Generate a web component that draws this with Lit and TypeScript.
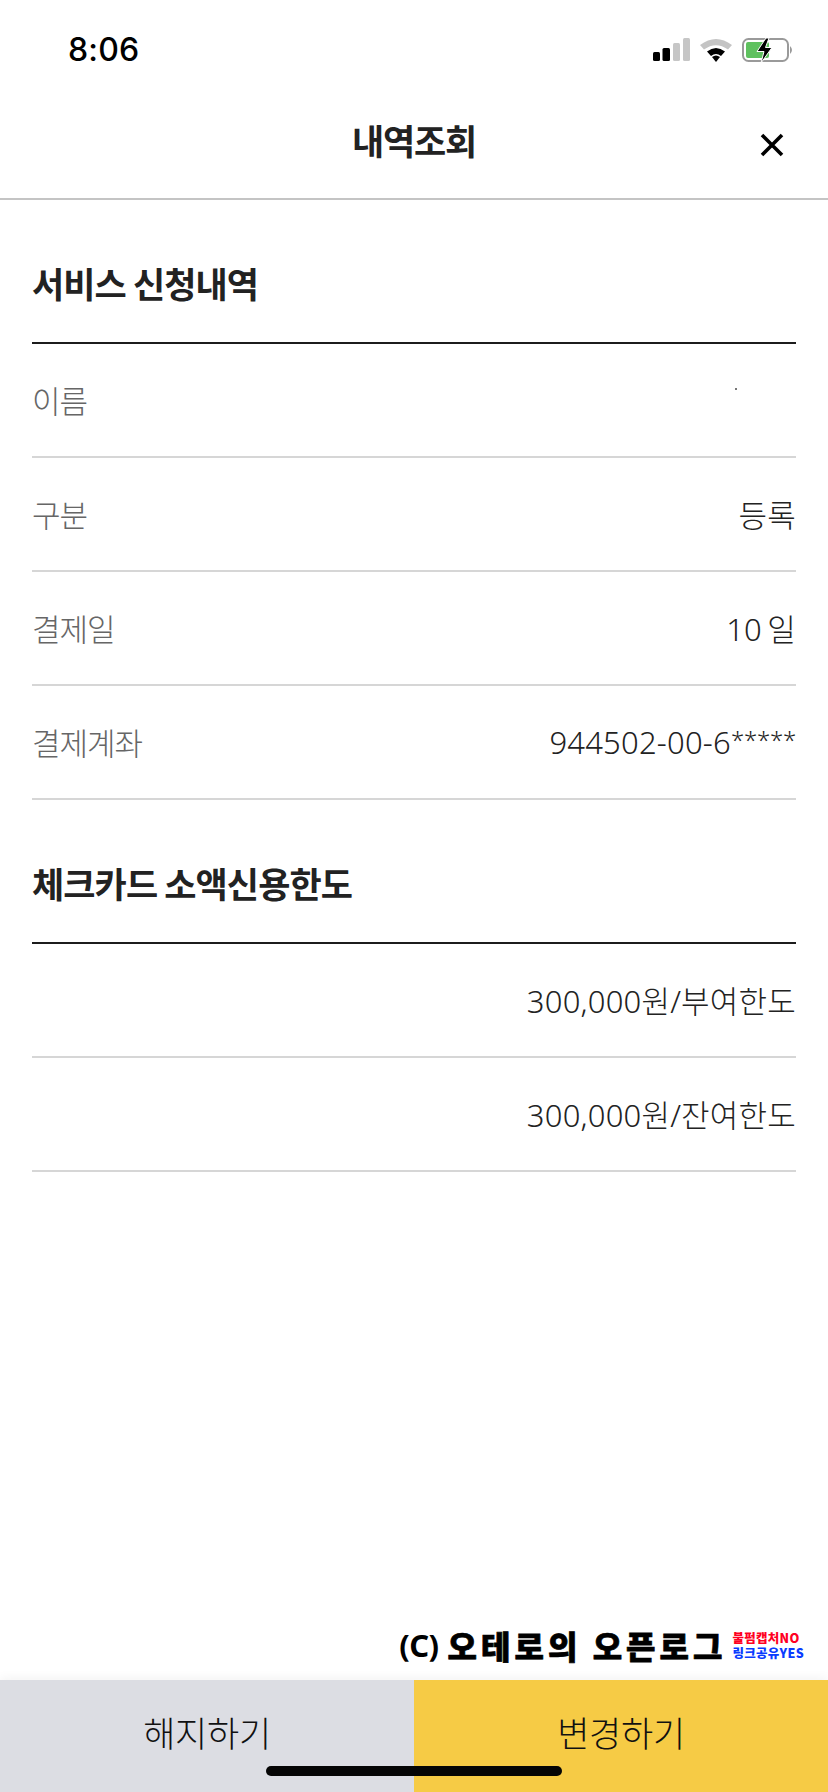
import { LitElement, html, css, svg } from "lit";
import { customElement } from "lit/decorators.js";

@customElement("app-root")
export class AppRoot extends LitElement {
  static styles = css`
    :host { display: block; width: 828px; height: 1792px; background: #fff; font-family: "Noto Sans CJK KR", "Noto Sans", sans-serif; position: relative; overflow: hidden; }
    .page { display: flex; flex-direction: column; height: 1792px; }
    .status { height: 88px; flex: none; display: flex; align-items: center; justify-content: space-between; padding: 12px 33px 0 68px; box-sizing: border-box; }
    .time { font-family: "Inter", "Liberation Sans", sans-serif; font-size: 32px; font-weight: 500; color: #000; letter-spacing: 0.2px; position: relative; top: -1px; }
    .status svg { display: block; }
    .nav { height: 112px; flex: none; box-sizing: border-box; border-bottom: 2px solid #c4c4c4; display: flex; align-items: center; justify-content: center; position: relative; padding-bottom: 8px; }
    .nav h1 { margin: 0; font-size: 35px; font-weight: 700; color: #222; letter-spacing: -1.2px; line-height: 1; }
    .close { position: absolute; right: 43px; top: 44px; display: block; }
    .content { flex: 1; padding: 0 32px; }
    .sec-title { height: 144px; box-sizing: border-box; border-bottom: 2px solid #1c1c1c; display: flex; align-items: center; margin: 0; font-size: 35px; font-weight: 700; color: #222; letter-spacing: -0.9px; padding-top: 22px; }
    .row { height: 114px; box-sizing: border-box; border-bottom: 2px solid #d6d6d6; display: flex; align-items: center; justify-content: space-between; font-family: "Noto Sans", "Noto Sans CJK KR", sans-serif; font-size: 31px; font-weight: 300; color: #222; padding-bottom: 1px; }
    .label { color: #666; letter-spacing: -1px; }
    .value { letter-spacing: 0.2px; word-spacing: -3px; }
    .stars { font-size: 24px; letter-spacing: -0.2px; vertical-align: 5px; }
    .mark { flex: none; height: 0; position: relative; }
    .wm { position: absolute; right: 24px; bottom: 19px; display: flex; align-items: center; gap: 6px; }
    .wm-main { display: flex; align-items: center; gap: 9px; color: #000; line-height: 32px; white-space: nowrap; }
    .wm-c { font-family: "Noto Sans", sans-serif; font-size: 31px; font-weight: 700; letter-spacing: -0.5px; }
    .wm-text { font-size: 32px; font-weight: 900; letter-spacing: 4px; word-spacing: 0; -webkit-text-stroke: 0.7px #000; }
    .wm-sub { display: flex; flex-direction: column; font-size: 12.5px; font-weight: 900; line-height: 15px; letter-spacing: 0.3px; white-space: nowrap; }
    .red { color: #ff0022; }
    .blue { color: #0a3cff; }
    .bar { height: 112px; flex: none; display: grid; grid-template-columns: 414px 414px; box-shadow: 0 -2px 10px rgba(0,0,0,.05); }
    .btn { display: flex; align-items: center; justify-content: center; font-size: 35px; font-weight: 300; color: #111; letter-spacing: -0.3px; padding-bottom: 10px; }
    .grey { background: #dcdde3; }
    .yellow { background: #f6cb45; }
    .home { position: absolute; left: 266px; top: 1766px; width: 296px; height: 10px; border-radius: 5px; background: #050505; }
    .speck { position: absolute; left: 735px; top: 388px; width: 2px; height: 2px; background: #777; }
  `;

  row(label: string, value: unknown) {
    return html`<div class="row"><span class="label">${label}</span><span class="value">${value}</span></div>`;
  }

  render() {
    return html`
      <div class="page">
        <div class="status">
          <span class="time">8:06</span>
          <svg width="142" height="26" viewBox="0 0 142 26">
            ${svg`
              <rect x="0" y="15" width="7" height="9" rx="1.5" fill="#000"/>
              <rect x="9.5" y="11" width="7.5" height="13" rx="1.5" fill="#000"/>
              <rect x="20" y="6" width="7" height="18" rx="1.5" fill="#c6c6c6"/>
              <rect x="30" y="1" width="7" height="23" rx="1.5" fill="#c6c6c6"/>
              <path d="M47 8 Q63 -4 79 8 L75 12.5 Q63 4 51 12.5 Z" fill="#c4c4c4"/>
              <path d="M54 14.5 Q63 7.5 72 14.5 L68 19 Q63 15 58 19 Z" fill="#000"/>
              <path d="M59 20 Q63 17 67 20 L63 25 Z" fill="#000"/>
              <rect x="90" y="2" width="45" height="22" rx="5.5" fill="none" stroke="#9a9a9a" stroke-width="2"/>
              <rect x="93" y="5" width="23" height="16" rx="2" fill="#5fc15f"/>
              <path d="M113 1 L104 14.5 L111 14.5 L108 26 L119 10.5 L112.5 10.5 L116 1 Z" fill="#000" stroke="#fff" stroke-width="1"/>
              <path d="M137 9 Q141 13 137 17 Z" fill="#9a9a9a"/>
            `}
          </svg>
        </div>
        <div class="nav">
          <h1>내역조회</h1>
          <svg class="close" width="26" height="26" viewBox="0 0 26 26">
            ${svg`<path d="M3 3 L23 23 M23 3 L3 23" stroke="#000" stroke-width="3.6" fill="none"/>`}
          </svg>
        </div>
        <div class="content">
          <h2 class="sec-title">서비스 신청내역</h2>
          ${this.row("이름", "")}
          ${this.row("구분", "등록")}
          ${this.row("결제일", "10 일")}
          ${this.row("결제계좌", html`944502-00-6<span class="stars">*****</span>`)}
          <h2 class="sec-title">체크카드 소액신용한도</h2>
          ${this.row("", "300,000원/부여한도")}
          ${this.row("", "300,000원/잔여한도")}
        </div>
        <div class="mark">
          <div class="wm">
            <span class="wm-main"><span class="wm-c">(C)</span><span class="wm-text">오테로의 오픈로그</span></span>
            <span class="wm-sub"><span class="red">불펌캡처NO</span><span class="blue">링크공유YES</span></span>
          </div>
        </div>
        <div class="bar">
          <div class="btn grey">해지하기</div>
          <div class="btn yellow">변경하기</div>
        </div>
      </div>
      <div class="home"></div>
      <div class="speck"></div>
    `;
  }
}
